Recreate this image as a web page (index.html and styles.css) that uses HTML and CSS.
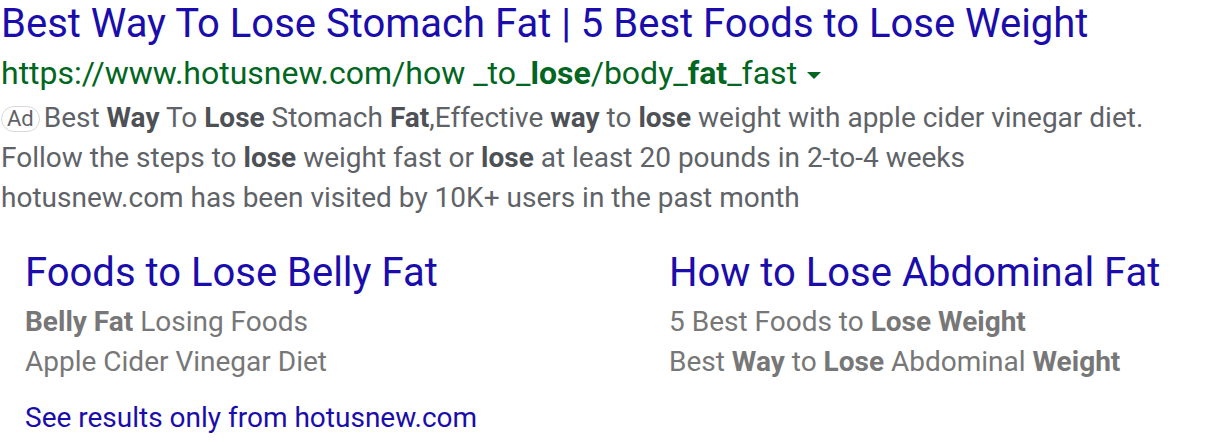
FILE: index.html
```html
<!DOCTYPE html>
<html>
<head>
<meta charset="utf-8">
<link rel="stylesheet" href="styles.css">
</head>
<body>
<div class="result">
  <a class="title" href="#">Best Way To Lose Stomach Fat | 5 Best Foods to Lose Weight</a>
  <div class="url">https://www.hotusnew.com/how _to_<b>lose</b>/body_<b>fat</b>_fast <span class="caret"></span></div>
  <div class="desc">
    <div class="line"><span class="ad">Ad</span> Best <b>Way</b> To <b>Lose</b> Stomach <b>Fat</b>,Effective <b>way</b> to <b>lose</b> weight with apple cider vinegar diet.</div>
    <div class="line">Follow the steps to <b>lose</b> weight fast or <b>lose</b> at least 20 pounds in 2-to-4 weeks</div>
    <div class="line">hotusnew.com has been visited by 10K+ users in the past month</div>
  </div>
  <div class="sitelinks">
    <div class="sitelink">
      <a class="sl-title" href="#">Foods to Lose Belly Fat</a>
      <div class="sl-line"><b>Belly Fat</b> Losing Foods</div>
      <div class="sl-line">Apple Cider Vinegar Diet</div>
    </div>
    <div class="sitelink">
      <a class="sl-title" href="#">How to Lose Abdominal Fat</a>
      <div class="sl-line">5 Best Foods to <b>Lose Weight</b></div>
      <div class="sl-line">Best <b>Way</b> to <b>Lose</b> Abdominal <b>Weight</b></div>
    </div>
  </div>
  <a class="see-more" href="#">See results only from hotusnew.com</a>
</div>
</body>
</html>
```
FILE: styles.css
```css
html, body {
  margin: 0;
  padding: 0;
  background: #ffffff;
}
body {
  font-family: Roboto, "Noto Sans", Arial, sans-serif;
}
.result {
  padding: 0 0 0 1px;
}
a {
  text-decoration: none;
}
.title {
  display: block;
  color: #1a0dab;
  font-size: 40px;
  line-height: 48px;
}
.url {
  color: #006621;
  font-size: 32px;
  line-height: 50px;
}
.url b {
  font-weight: 700;
}
.caret {
  display: inline-block;
  width: 0;
  height: 0;
  border-left: 7px solid transparent;
  border-right: 7px solid transparent;
  border-top: 7px solid #006621;
  vertical-align: middle;
  margin-left: 2px;
}
.desc {
  color: #5f6368;
  font-size: 28px;
  line-height: 40px;
}
.desc b {
  color: #4d5156;
}
.ad {
  display: inline-block;
  font-size: 22px;
  line-height: 24px;
  padding: 0 5px;
  border: 1px solid #d9d9d9;
  border-radius: 13px;
  color: #5f6368;
  vertical-align: 1px;
  margin-right: -3px;
}
.sitelinks {
  display: grid;
  grid-template-columns: 644px 1fr;
  padding: 26px 0 0 24px;
}
.sl-title {
  display: block;
  color: #1a0dab;
  font-size: 40px;
  line-height: 58px;
}
.sl-line {
  color: #777777;
  font-size: 28px;
  line-height: 40px;
}
.see-more {
  display: block;
  color: #1a0dab;
  font-size: 28px;
  line-height: 40px;
  margin: 16px 0 0 24px;
}
```
